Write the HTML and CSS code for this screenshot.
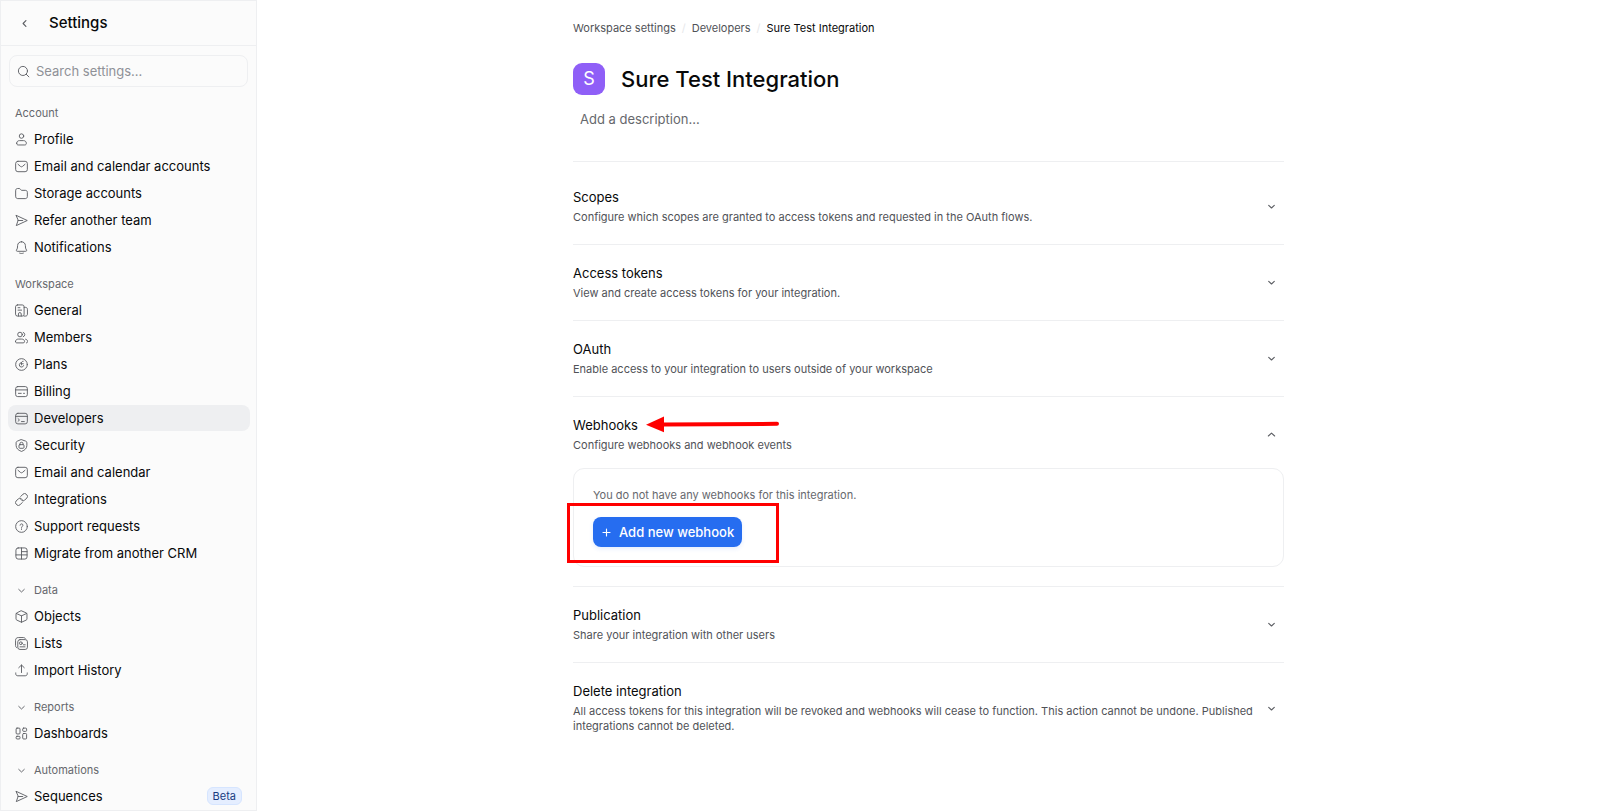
FILE: index.html
```html
<!DOCTYPE html>
<html lang="en">
<head>
    <meta charset="UTF-8">
    <meta name="viewport" content="width=device-width, initial-scale=1.0">
    <title>Sure Test Integration - Settings</title>
    <link rel="stylesheet" href="styles.css">
</head>
<body>
    <!-- Icon sprite -->
    <svg class="sprite" aria-hidden="true">
        <symbol id="i-down" viewBox="0 0 14 14"><path d="M4 5.8l3 2.8 3-2.8"/></symbol>
        <symbol id="i-up" viewBox="0 0 14 14"><path d="M3.6 8.6L7 5.6l3.4 3"/></symbol>
        <symbol id="i-back" viewBox="0 0 14 14"><path d="M8.5 3.8L5.5 7l3 3.2"/></symbol>
        <symbol id="i-search" viewBox="0 0 14 14"><circle cx="6.4" cy="6.4" r="4.9"/><path d="M10 10l2.8 2.8"/></symbol>
        <symbol id="i-user" viewBox="0 0 14 14"><circle cx="7" cy="3.3" r="2.4"/><path d="M1.8 11c0-1.8 1.4-2.8 3-2.8h4.4c1.6 0 3 1 3 2.8 0 1.2-.6 1.9-1.7 1.9H3.5c-1.1 0-1.7-.7-1.7-1.9z"/></symbol>
        <symbol id="i-mail" viewBox="0 0 14 14"><rect x=".7" y="1.4" width="12.6" height="11.2" rx="2.4"/><path d="M3.2 4.6l2.7 2.3c.7.6 1.5.6 2.2 0l2.7-2.3"/></symbol>
        <symbol id="i-folder" viewBox="0 0 14 14"><path d="M.7 3.7c0-1.3.8-2.1 2.1-2.1h1.5c.7 0 1.2.3 1.6.9l.4.5c.3.4.6.6 1.1.6h3.7c1.3 0 2.2.8 2.2 2.1v4.6c0 1.3-.9 2.2-2.2 2.2H2.9c-1.3 0-2.2-.9-2.2-2.2z"/></symbol>
        <symbol id="i-send" viewBox="0 0 14 14"><path d="M1.4 1.5L13.2 7 1.4 12.5 3.3 7zM3.3 7h5"/></symbol>
        <symbol id="i-bell" viewBox="0 0 14 14"><path d="M7 .8C4.5.8 2.9 2.6 2.8 4.9L2.6 7.7 1.6 9.8c-.3.7 0 1.3.8 1.3h9.2c.8 0 1.1-.6.8-1.3l-1-2.1-.2-2.8C11.1 2.6 9.5.8 7 .8zM5 13.1c1.2.5 2.8.5 4 0"/></symbol>
        <symbol id="i-general" viewBox="0 0 14 14"><rect x=".6" y="1" width="9.2" height="12" rx="2"/><path d="M9.8 3.6h1.4c1.3 0 2.2.8 2.2 2.1V11c0 1.2-.8 2-2 2H9.800M3.300 4h2M3.300 6.600h3.800M3.700 13v-2.300c0-1 .6-1.500 1.500-1.500s1.500.5 1.500 1.500V13"/></symbol>
        <symbol id="i-members" viewBox="0 0 14 14"><circle cx="5.4" cy="3.8" r="2.5"/><path d="M.5 11.4c0-1.8 1.5-2.7 3.1-2.7h3.6c1.6 0 3.1.9 3.1 2.7 0 .9-.6 1.4-1.5 1.4H2c-.9 0-1.5-.5-1.5-1.4zM8.9 1.5a2.5 2.5 0 010 4.7M11.4 8.8c1.3.3 2.2 1.2 2.2 2.5 0 1-.5 1.5-1.3 1.5"/></symbol>
        <symbol id="i-plans" viewBox="0 0 14 14"><circle cx="7" cy="7" r="6.3"/><path d="M9.3 8.2A2.4 2.4 0 116.9 5M6.9 7.4V5.5c0-1.2.8-2 1.9-2M6.9 6.2h2"/></symbol>
        <symbol id="i-billing" viewBox="0 0 14 14"><rect x=".7" y="1.7" width="12.6" height="10.8" rx="2.2"/><path d="M.7 5.3h12.6M3.7 9h3M9.2 9h1"/></symbol>
        <symbol id="i-dev" viewBox="0 0 14 14"><rect x=".7" y="1.4" width="12.6" height="11.4" rx="2.4"/><path d="M.7 4.7h12.6M3.3 7.2l1.5 1.4L3.3 10M7 10.3h3"/></symbol>
        <symbol id="i-shield" viewBox="0 0 14 14"><path d="M7 .7l4.500 1.600c.8.300 1.300.8 1.300 1.700v2.800c0 3.200-2 5.200-5.800 6.600-3.800-1.400-5.800-3.400-5.800-6.600V4c0-.9.500-1.400 1.300-1.700z"/><rect x="4.3" y="6.1" width="5.4" height="3.9" rx="1"/><path d="M5.3 6.1V5.2a1.7 1.7 0 013.4 0v.9"/></symbol>
        <symbol id="i-link" viewBox="0 0 14 14"><g transform="rotate(-45 7 7)"><path d="M5.200 9.900H1.700A2.300 2.300 0 01-.6 7.600V6.400a2.300 2.300 0 012.300-2.300h3.500a2.300 2.300 0 012.300 2.300v1"/><path d="M8.800 4.100h3.500a2.300 2.300 0 012.300 2.300v1.200a2.300 2.300 0 01-2.300 2.300H8.800a2.300 2.300 0 01-2.300-2.300v-1"/></g></symbol>
        <symbol id="i-help" viewBox="0 0 14 14"><circle cx="7" cy="7" r="6.3"/><path d="M5.5 5.6c.1-.9.7-1.4 1.5-1.4.9 0 1.6.5 1.6 1.4 0 1.1-1.6 1.2-1.6 2.4M7 9.500v.7"/></symbol>
        <symbol id="i-migrate" viewBox="0 0 14 14"><rect x="1" y="1" width="12" height="12" rx="2.4"/><path d="M7 1v12M7 5h6M1 8.5h12"/></symbol>
        <symbol id="i-cube" viewBox="0 0 14 14"><path d="M7 .9l5 2.2c.6.3.9.7.9 1.3v5.1c0 .7-.3 1.1-.9 1.4L7 13.2l-5-2.300c-.6-.3-.9-.7-.9-1.400V4.400c0-.6.3-1 .9-1.300zM1.400 3.700L7 6.300l5.600-2.600M7 6.300v6.900"/></symbol>
        <symbol id="i-lists" viewBox="0 0 14 14"><rect x="3" y="2.8" width="10.4" height="10.6" rx="2.4"/><path d="M1.9 11.6C1 11 .6 10.3.6 9.2V3.6c0-1.9 1.1-3 3-3h5.2c1 0 1.8.3 2.4 1M5.4 10.6h5.4M9 8.4h2"/><circle cx="6.3" cy="6.7" r="1.5"/></symbol>
        <symbol id="i-upload" viewBox="0 0 14 14"><path d="M7 9.2V1.2M4 4l3-2.9L10 4M.8 9.6v.9c0 1.3.8 2.2 2.2 2.2h8c1.4 0 2.2-.9 2.2-2.2v-.9"/></symbol>
        <symbol id="i-dash" viewBox="0 0 14 14"><rect x="1.2" y="1.2" width="4.2" height="6.3" rx="1"/><rect x="8.3" y="1.2" width="4.2" height="3.5" rx="1"/><rect x="1.2" y="10" width="4.2" height="2.9" rx="1"/><rect x="8.3" y="7" width="4.2" height="5.9" rx="1"/></symbol>
        <symbol id="i-plus" viewBox="0 0 14 14"><path d="M7 3.2v7.6M3.2 7h7.6"/></symbol>
    </svg>

    <div class="layout">
        <aside class="sidebar">
            <header class="sidebar-header">
                <button class="back-btn" type="button" aria-label="Back"><svg class="icon"><use href="#i-back"/></svg></button>
                <h2>Settings</h2>
            </header>
            <label class="search">
                <svg class="icon"><use href="#i-search"/></svg>
                <input type="search" placeholder="Search settings..." aria-label="Search settings">
            </label>

            <nav class="nav">
                <section class="nav-group">
                    <h3>Account</h3>
                    <a class="nav-item" href="#"><svg class="icon"><use href="#i-user"/></svg>Profile</a>
                    <a class="nav-item" href="#"><svg class="icon"><use href="#i-mail"/></svg>Email and calendar accounts</a>
                    <a class="nav-item" href="#"><svg class="icon"><use href="#i-folder"/></svg>Storage accounts</a>
                    <a class="nav-item" href="#"><svg class="icon"><use href="#i-send"/></svg>Refer another team</a>
                    <a class="nav-item" href="#"><svg class="icon"><use href="#i-bell"/></svg>Notifications</a>
                </section>
                <section class="nav-group">
                    <h3>Workspace</h3>
                    <a class="nav-item" href="#"><svg class="icon"><use href="#i-general"/></svg>General</a>
                    <a class="nav-item" href="#"><svg class="icon"><use href="#i-members"/></svg>Members</a>
                    <a class="nav-item" href="#"><svg class="icon"><use href="#i-plans"/></svg>Plans</a>
                    <a class="nav-item" href="#"><svg class="icon"><use href="#i-billing"/></svg>Billing</a>
                    <a class="nav-item active" href="#" aria-current="page"><svg class="icon"><use href="#i-dev"/></svg>Developers</a>
                    <a class="nav-item" href="#"><svg class="icon"><use href="#i-shield"/></svg>Security</a>
                    <a class="nav-item" href="#"><svg class="icon"><use href="#i-mail"/></svg>Email and calendar</a>
                    <a class="nav-item" href="#"><svg class="icon"><use href="#i-link"/></svg>Integrations</a>
                    <a class="nav-item" href="#"><svg class="icon"><use href="#i-help"/></svg>Support requests</a>
                    <a class="nav-item" href="#"><svg class="icon"><use href="#i-migrate"/></svg>Migrate from another CRM</a>
                </section>
                <section class="nav-group">
                    <h3><button class="group-toggle" type="button" aria-expanded="true"><svg class="icon"><use href="#i-down"/></svg>Data</button></h3>
                    <a class="nav-item" href="#"><svg class="icon"><use href="#i-cube"/></svg>Objects</a>
                    <a class="nav-item" href="#"><svg class="icon"><use href="#i-lists"/></svg>Lists</a>
                    <a class="nav-item" href="#"><svg class="icon"><use href="#i-upload"/></svg>Import History</a>
                </section>
                <section class="nav-group">
                    <h3><button class="group-toggle" type="button" aria-expanded="true"><svg class="icon"><use href="#i-down"/></svg>Reports</button></h3>
                    <a class="nav-item" href="#"><svg class="icon"><use href="#i-dash"/></svg>Dashboards</a>
                </section>
                <section class="nav-group">
                    <h3><button class="group-toggle" type="button" aria-expanded="true"><svg class="icon"><use href="#i-down"/></svg>Automations</button></h3>
                    <a class="nav-item" href="#"><svg class="icon"><use href="#i-send"/></svg>Sequences<span class="badge">Beta</span></a>
                </section>
            </nav>
        </aside>

        <main class="main">
            <div class="content">
                <nav class="breadcrumb" aria-label="Breadcrumb">
                    <a href="#">Workspace settings</a>
                    <span class="sep">/</span>
                    <a href="#">Developers</a>
                    <span class="sep">/</span>
                    <span class="current">Sure Test Integration</span>
                </nav>

                <div class="title-row">
                    <div class="logo">S</div>
                    <h1>Sure Test Integration</h1>
                </div>
                <input class="description" type="text" placeholder="Add a description..." aria-label="Description">

                <div class="panels">
                    <section class="panel">
                        <div class="panel-head">
                            <div class="panel-text">
                                <h2>Scopes</h2>
                                <p>Configure which scopes are granted to access tokens and requested in the OAuth flows.</p>
                            </div>
                            <button class="toggle" type="button" aria-label="Expand Scopes"><svg class="icon"><use href="#i-down"/></svg></button>
                        </div>
                    </section>
                    <section class="panel">
                        <div class="panel-head">
                            <div class="panel-text">
                                <h2>Access tokens</h2>
                                <p>View and create access tokens for your integration.</p>
                            </div>
                            <button class="toggle" type="button" aria-label="Expand Access tokens"><svg class="icon"><use href="#i-down"/></svg></button>
                        </div>
                    </section>
                    <section class="panel">
                        <div class="panel-head">
                            <div class="panel-text">
                                <h2>OAuth</h2>
                                <p>Enable access to your integration to users outside of your workspace</p>
                            </div>
                            <button class="toggle" type="button" aria-label="Expand OAuth"><svg class="icon"><use href="#i-down"/></svg></button>
                        </div>
                    </section>
                    <section class="panel">
                        <div class="panel-head">
                            <div class="panel-text">
                                <h2>Webhooks</h2>
                                <p>Configure webhooks and webhook events</p>
                                <svg class="arrow" viewBox="0 0 134 18" aria-hidden="true">
                                    <path class="arrow-head" d="M0 8.800L18 .6v15.600z"/>
                                    <path class="arrow-line" d="M17 8.500L131 7.800"/>
                                </svg>
                            </div>
                            <button class="toggle" type="button" aria-label="Collapse Webhooks"><svg class="icon"><use href="#i-up"/></svg></button>
                        </div>
                        <div class="card">
                            <p>You do not have any webhooks for this integration.</p>
                            <button class="primary-btn" type="button"><svg class="icon"><use href="#i-plus"/></svg>Add new webhook</button>
                            <div class="highlight"></div>
                        </div>
                    </section>
                    <section class="panel">
                        <div class="panel-head">
                            <div class="panel-text">
                                <h2>Publication</h2>
                                <p>Share your integration with other users</p>
                            </div>
                            <button class="toggle" type="button" aria-label="Expand Publication"><svg class="icon"><use href="#i-down"/></svg></button>
                        </div>
                    </section>
                    <section class="panel">
                        <div class="panel-head">
                            <div class="panel-text">
                                <h2>Delete integration</h2>
                                <p>All access tokens for this integration will be revoked and webhooks will cease to function. This action cannot be undone. Published integrations cannot be deleted.</p>
                            </div>
                            <button class="toggle" type="button" aria-label="Expand Delete integration"><svg class="icon"><use href="#i-down"/></svg></button>
                        </div>
                    </section>
                </div>
            </div>
        </main>
    </div>
</body>
</html>
```

FILE: styles.css
```css
* {
    box-sizing: border-box;
}
body {
    margin: 0;
    font-family: Inter, "Liberation Sans", sans-serif;
    font-size: 13px;
    font-weight: 400;
    line-height: 18px;
    color: #08090a;
    background: #fff;
}
h1, h2, h3, p {
    margin: 0;
    font-weight: 400;
}
a {
    color: inherit;
    text-decoration: none;
}
button, input {
    font: inherit;
    color: inherit;
    padding: 0;
    border: none;
    background: none;
}
button {
    cursor: pointer;
}
.sprite {
    display: none;
}
.icon {
    width: 13px;
    height: 13px;
    flex: none;
    fill: none;
    stroke: #5c5e63;
    stroke-width: 1;
    stroke-linecap: round;
    stroke-linejoin: round;
}
.layout {
    display: flex;
    min-height: 100vh;
}

/* Sidebar */
.sidebar {
    width: 257px;
    height: 100vh;
    flex: none;
    overflow: hidden;
    background: #fbfbfb;
    border: 1px solid #eeeff1;
}
.sidebar-header {
    display: flex;
    align-items: center;
    gap: 15px;
    height: 45px;
    padding-left: 13px;
    border-bottom: 1px solid #eeeff1;
}
.sidebar-header h2 {
    font-size: 15px;
    font-weight: 500;
}
.back-btn {
    display: flex;
    align-items: center;
    justify-content: center;
    width: 20px;
    height: 20px;
}
.back-btn .icon {
    stroke-width: 1.2;
}
.search {
    display: flex;
    align-items: center;
    gap: 6px;
    height: 32px;
    margin: 9px 8px 0;
    padding: 0 7px;
    border: 1px solid #eeeff1;
    border-radius: 8px;
}
.search input {
    flex: 1;
    min-width: 0;
    outline: none;
}
.search input::placeholder {
    color: #8f9197;
    opacity: 1;
}
.nav {
    display: flex;
    flex-direction: column;
    gap: 16px;
    padding: 18px 6px 0 7px;
}
.nav-group {
    display: flex;
    flex-direction: column;
    gap: 1px;
}
.nav-group h3 {
    margin-bottom: 4px;
    padding-left: 7px;
    font-size: 11px;
    line-height: 16px;
    color: #66686d;
}
.group-toggle {
    display: flex;
    align-items: center;
    gap: 6px;
}
.nav-item {
    display: flex;
    align-items: center;
    gap: 6px;
    height: 26px;
    padding: 0 8px 0 7px;
    border-radius: 8px;
}
.nav-item.active {
    background: #eeeff1;
}
.badge {
    margin-left: auto;
    padding: 0 5px;
    border: 1px solid #d6e5ff;
    border-radius: 6px;
    background: #e5eeff;
    color: #183c81;
    font-size: 11px;
    line-height: 16px;
}

/* Main column */
.main {
    flex: 1;
    min-width: 0;
    padding: 20px 24px;
}
.content {
    max-width: 711px;
    margin: 0 auto;
}
.breadcrumb {
    display: flex;
    gap: 6px;
    font-size: 11px;
    line-height: 16px;
    color: #505257;
}
.breadcrumb .sep {
    color: #e6e7ea;
}
.breadcrumb .current {
    color: #08090a;
}
.title-row {
    display: flex;
    align-items: center;
    gap: 16px;
    margin-top: 27px;
}
.logo {
    width: 32px;
    height: 32px;
    border-radius: 9px;
    background: #8f5ff7;
    color: #fff;
    font-size: 18px;
    line-height: 32px;
    text-align: center;
}
h1 {
    font-size: 22px;
    font-weight: 500;
    line-height: 32px;
}
.description {
    display: block;
    width: 100%;
    margin-top: 15px;
    padding: 0 7px;
    outline: none;
}
.description::placeholder {
    color: #66686d;
    opacity: 1;
}
.panels {
    margin-top: 33px;
    padding-top: 7px;
    border-top: 1px solid #eeeff1;
}
.panel {
    padding: 19px 0;
    border-bottom: 1px solid #eeeff1;
}
.panel:last-child {
    border-bottom: none;
}
.panel-head {
    display: flex;
    align-items: center;
    justify-content: space-between;
    gap: 4px;
}
.panel-text {
    position: relative;
}
.panel h2 {
    font-size: 13px;
}
.panel p {
    font-size: 11px;
    line-height: 15px;
    color: #505257;
}
.panel-text p {
    margin-top: 4px;
}
.toggle {
    display: flex;
    padding: 6px;
}
.toggle .icon {
    stroke-width: 1.2;
}
.card {
    position: relative;
    margin-top: 15px;
    padding: 19px;
    border: 1px solid #eeeff1;
    border-radius: 11px;
}
.card p {
    color: #66686d;
}
.primary-btn {
    display: flex;
    align-items: center;
    gap: 6px;
    height: 30px;
    margin-top: 14px;
    padding: 0 8px 0 7px;
    border-radius: 8px;
    background: #266df0;
    box-shadow: 0 2px 4px rgba(38, 109, 240, 0.12);
    color: #fff;
    font-weight: 500;
}
.primary-btn .icon {
    stroke: #fff;
    stroke-width: 1.2;
}

/* Callouts */
.arrow {
    position: absolute;
    left: 73px;
    top: 0;
    width: 134px;
    height: 18px;
}
.arrow-head {
    fill: #ff0000;
}
.arrow-line {
    stroke: #ff0000;
    stroke-width: 4;
    stroke-linecap: round;
}
.highlight {
    position: absolute;
    left: -7px;
    top: 34px;
    width: 212px;
    height: 60px;
    border: 3px solid #ff0000;
    pointer-events: none;
}
```
